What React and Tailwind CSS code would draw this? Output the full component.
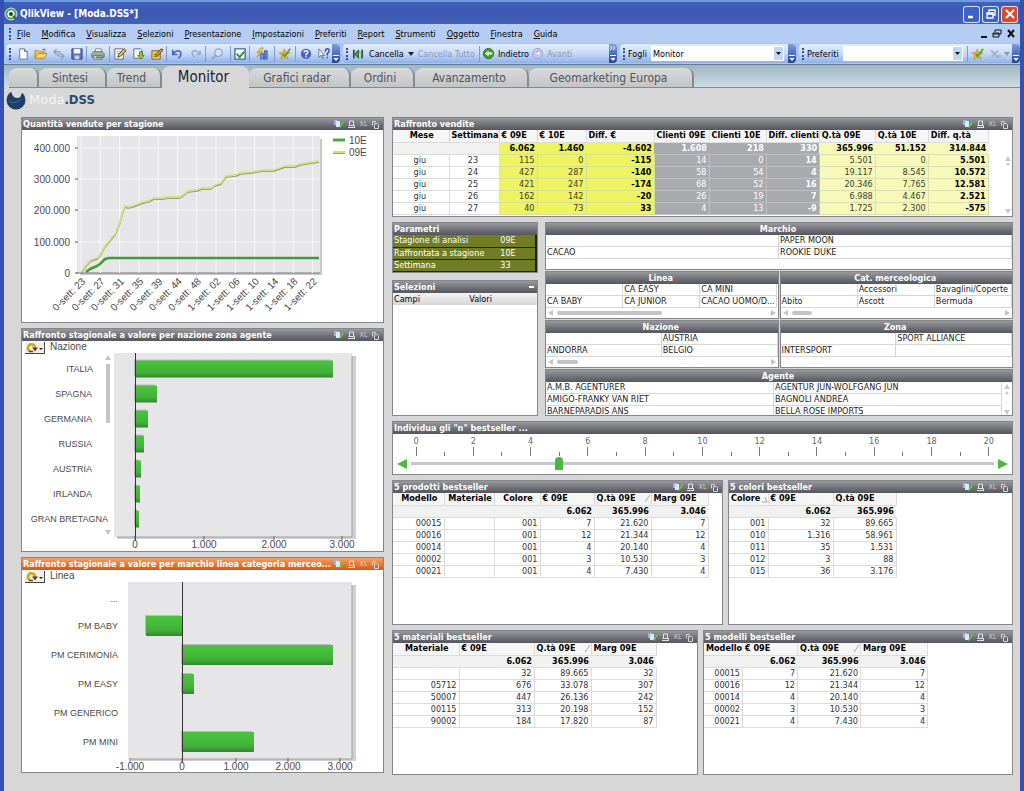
import React, { useState } from "react";

const MENU = [
  "File",
  "Modifica",
  "Visualizza",
  "Selezioni",
  "Presentazione",
  "Impostazioni",
  "Preferiti",
  "Report",
  "Strumenti",
  "Oggetto",
  "Finestra",
  "Guida",
];

const TABS = [
  { name: "", width: "w-[30px]" },
  { name: "Sintesi", width: "w-[68px]" },
  { name: "Trend", width: "w-[55px]" },
  { name: "Monitor", width: "w-[87px]" },
  { name: "Grafici radar", width: "w-[102px]" },
  { name: "Ordini", width: "w-[64px]" },
  { name: "Avanzamento", width: "w-[114px]" },
  { name: "Geomarketing Europa", width: "w-[165px]" },
];

/* ---------- toolbar ---------- */

const ICONS = {
  new: <path d="M4 2h5l3 3v8H4z M9 2v3h3" fill="#fff" stroke="#5b6f96" />,
  open: (
    <>
      <path d="M1 4h4l1 1h5v7H1z" fill="#f3c74e" stroke="#b98325" />
      <path d="M1 12l3-5h10l-3 5z" fill="#fbdc78" stroke="#b98325" />
      <path d="M9 3q2-2 4 1" fill="none" stroke="#5d4a2a" />
    </>
  ),
  refresh: (
    <g fill="none" stroke="#8d9fc4" strokeWidth="1.4">
      <path d="M5 2L2 5l3 3M2 5h5q2 0 2 3" />
      <path d="M10 7l3 3-3 3M13 10H9q-3 0-3-3" />
    </g>
  ),
  save: (
    <>
      <path d="M2 2h11v11H2z" fill="#5673c4" stroke="#33478f" />
      <path d="M4 2h7v5H4z" fill="#f1f4fb" />
      <path d="M5 9h5v4H5z" fill="#c9d2e8" />
    </>
  ),
  print: (
    <>
      <path d="M4 6l1-4h6l1 4z" fill="#fff" stroke="#77828f" />
      <path d="M1 7l2-2h9l2 2v4H1z" fill="#a7b3a9" stroke="#5f6b66" />
      <path d="M3 9h9v4H3z" fill="#e6ece6" stroke="#5f6b66" />
      <path d="M5 11h7" stroke="#3fa33f" strokeWidth="2" />
    </>
  ),
  edit: (
    <>
      <path d="M2 2h9v11H2z" fill="#fff" stroke="#55627c" />
      <path d="M4 5h5M4 7h4" stroke="#8fa0bd" />
      <path d="M5 11l1-3 6-6 2 2-6 6z" fill="#e8c14a" stroke="#4b4021" />
    </>
  ),
  load: (
    <>
      <path d="M2 2h7l2 2v8H2z" fill="#fff" stroke="#55627c" />
      <path d="M8 5h3v4h2l-3 4-4-4h2z" fill="#9cc93c" stroke="#5a7d1c" />
    </>
  ),
  design: (
    <>
      <path d="M2 4h9v9H2z" fill="#f0c960" stroke="#8a6420" />
      <path d="M4 8h5M4 10h4" stroke="#8a6420" />
      <path d="M6 8l6-6 2 1-6 7z" fill="#d7a63a" stroke="#4b4021" />
    </>
  ),
  undo: <path d="M3 3v5h5M3 8q4-6 8-3 2 3-2 7" fill="none" stroke="#4465c0" strokeWidth="1.8" />,
  redo: <path d="M12 4v4H8M12 8Q8 2 4 5q-2 3 2 6" fill="none" stroke="#93a7d3" strokeWidth="1.5" />,
  find: (
    <>
      <circle cx="8" cy="6" r="4" fill="#d5e0f4" stroke="#97a5c4" strokeWidth="1.4" />
      <path d="M5 9l-4 4" stroke="#a99db5" strokeWidth="2" />
    </>
  ),
  check: (
    <>
      <path d="M2 2h11v11H2z" fill="#fff" stroke="#4a66a8" strokeWidth="1.5" />
      <path d="M4 7l3 4 5-6" fill="none" stroke="#2f9e36" strokeWidth="2.2" />
    </>
  ),
  chart: (
    <>
      <path d="M6 7h3v6H6z" fill="#7ba4e6" stroke="#3a5ca8" />
      <path d="M10 4h3v9h-3z" fill="#5f88d8" stroke="#3a5ca8" />
      <path d="M6 1L2 6h3l-3 5 6-6H5l4-4z" fill="#f6d54b" stroke="#a98017" strokeWidth=".7" />
    </>
  ),
  star: (
    <>
      <path d="M7 2l1 4 5 0-4 3 2 4-4-2-4 2 1-4-3-3h4z" fill="#f2b53c" stroke="#c27d1c" strokeWidth=".6" />
      <path d="M5 7l2 3 6-8" fill="none" stroke="#3fae2f" strokeWidth="1.8" />
    </>
  ),
  help: (
    <>
      <circle cx="7.5" cy="7.5" r="6" fill="#4465c4" stroke="#c9d6f2" />
      <path d="M5.500 6q0-2 2-2t2 2q0 1-2 2v1M7.500 10v1.300" fill="none" stroke="#fff" strokeWidth="1.5" />
    </>
  ),
  whats: (
    <>
      <path d="M2 2v9l2-2 2 4 1-1-2-3h3z" fill="#fff" stroke="#45587f" strokeWidth=".8" />
      <path d="M9 5q0-3 2-3t2 2q0 2-2 3v2M11 10.500v1.500" fill="none" stroke="#3455b0" strokeWidth="1.6" />
    </>
  ),
  cancella: (
    <>
      <path d="M3 3v9M12 3v9" stroke="#2c4a33" strokeWidth="1.8" />
      <path d="M4 7.500L8 3v9z" fill="#3fa347" stroke="#1f5c28" />
      <path d="M8 4l3 3v5" fill="none" stroke="#5a9a5f" />
    </>
  ),
  back: (
    <>
      <circle cx="7" cy="7" r="5.500" fill="#3f9d34" stroke="#2a6f22" />
      <path d="M3 7l4-3v2h4v2H7v2z" fill="#fff" />
    </>
  ),
  forward: (
    <>
      <circle cx="7" cy="7" r="5.500" fill="#c5c9ea" stroke="#9a9cc9" />
      <path d="M11 7L7 4v2H3v2h4v2z" fill="#fff" stroke="#9a9cc9" strokeWidth=".7" />
    </>
  ),
  remove: <path d="M2 4q4 2 8 8M10 4q-4 2-7 7M10 9l3 1" fill="none" stroke="#a9aebf" strokeWidth="1.8" />,
};

function Icon({ name }) {
  return (
    <svg viewBox="0 0 15 15" className="size-[14px] shrink-0" aria-hidden="true">
      {ICONS[name]}
    </svg>
  );
}

const Grip = () => <div className="mx-[3px] h-3 shrink-0 border-l-2 border-dotted border-[#33508f]" />;
const Sep = () => <div className="h-4 w-px shrink-0 bg-[#7c9bd6]" />;

function ToolButton({ name, className }) {
  return (
    <button aria-label={name} className={`flex shrink-0 items-center justify-center ${className || "w-[18px]"}`}>
      <Icon name={name} />
    </button>
  );
}

function BarEnd({ more }) {
  return (
    <button
      aria-label="Opzioni barra"
      className="flex h-[19px] w-2 shrink-0 flex-col items-center justify-between rounded-r-sm bg-linear-to-b from-[#7d9fdd] to-[#23449a] py-0.5"
    >
      <svg viewBox="0 0 8 5" className="h-[5px] w-2">
        {more && <path d="M1 0l2 2-2 2M4 0l2 2-2 2" fill="none" stroke="#fff" />}
      </svg>
      <svg viewBox="0 0 8 6" className="h-[6px] w-2">
        <path d="M1 .5h6" stroke="#fff" />
        <path d="M1.500 3h5L4 6z" fill="#fff" />
      </svg>
    </button>
  );
}

function Combo({ label, value }) {
  return (
    <label className="flex min-w-0 flex-1 items-center gap-1">
      {label}
      <span className="relative min-w-0 flex-1">
        <select className="block h-[15px] w-full appearance-none bg-white px-0.5 text-black" defaultValue={value}>
          <option>{value}</option>
        </select>
        <svg viewBox="0 0 10 15" className="pointer-events-none absolute top-0 right-0 h-[15px] w-[10px]">
          <path d="M0 1h9v13H0z" fill="#c1d5f7" />
          <path d="M2 6h5L4.500 9z" fill="#111" />
        </svg>
      </span>
    </label>
  );
}

const BAR = "flex h-[19px] items-center rounded-sm bg-linear-to-b from-[#e3edfd] via-[#c6d9f8] to-[#8fb0e8]";

function Toolbar() {
  return (
    <div className="flex h-[21px] items-center gap-[3px] bg-[#a9c4f0] pl-[2px]">
      <div className={BAR}>
        <Grip />
        <ToolButton name="new" />
        <ToolButton name="open" />
        <ToolButton name="refresh" />
        <ToolButton name="save" />
        <Sep />
        <ToolButton name="print" className="w-[22px]" />
        <Sep />
        <ToolButton name="edit" className="w-5" />
        <ToolButton name="load" />
        <ToolButton name="design" />
        <Sep />
        <ToolButton name="undo" className="w-5" />
        <ToolButton name="redo" />
        <Sep />
        <ToolButton name="find" className="w-6" />
        <Sep />
        <ToolButton name="check" />
        <Sep />
        <ToolButton name="chart" className="w-6" />
        <Sep />
        <ToolButton name="star" className="w-5" />
        <Sep />
        <ToolButton name="help" className="w-5" />
        <ToolButton name="whats" className="w-4" />
        <BarEnd />
      </div>
      <div className={`${BAR} w-[274px] shrink-0`}>
        <Grip />
        <button className="flex items-center gap-1">
          <Icon name="cancella" />
          Cancella
          <svg viewBox="0 0 6 4" className="h-1 w-1.5">
            <path d="M0 0h6L3 4z" fill="#222" />
          </svg>
        </button>
        <button className="mx-1 text-[#8b98b4]" disabled>
          Cancella Tutto
        </button>
        <Sep />
        <button className="ml-0.5 flex items-center gap-0.5">
          <Icon name="back" />
          Indietro
        </button>
        <button className="ml-0.5 flex flex-1 items-center gap-0.5 text-[#8b98b4]" disabled>
          <Icon name="forward" />
          Avanti
        </button>
        <BarEnd more />
      </div>
      <div className={`${BAR} min-w-0 flex-[176]`}>
        <Grip />
        <Combo label="Fogli" value="Monitor" />
        <div className="w-1" />
        <BarEnd />
      </div>
      <div className={`${BAR} min-w-0 flex-[221]`}>
        <Grip />
        <Combo label="Preferiti" value="" />
        <div className="w-1" />
        <Sep />
        <ToolButton name="star" className="w-5" />
        <ToolButton name="remove" className="w-4" />
        <svg viewBox="0 0 6 4" className="mr-0.5 h-1 w-1.5">
          <path d="M0 0h6L3 4z" fill="#8e95a8" />
        </svg>
        <BarEnd />
      </div>
    </div>
  );
}

function TitleBar() {
  const box = "flex size-[17px] items-center justify-center rounded-[3px] border border-white/80";
  return (
    <header className="flex h-6 items-center gap-0.5 border-t-2 border-[#6f9be0] bg-linear-to-b from-[#3f61bd] via-[#3d58b1] to-[#4263b9] pt-0.5 pr-0.5">
      <svg viewBox="0 0 14 14" className="size-[14px]">
        <circle cx="7" cy="7" r="6" fill="#58a356" stroke="#cfe2ea" />
        <circle cx="7" cy="7" r="3.500" fill="#fff" />
        <circle cx="7" cy="7" r="2" fill="#1f3f30" />
        <path d="M9 9l3 3" stroke="#2e6a3b" strokeWidth="2" />
      </svg>
      <h1 className="flex-1 text-[10px] font-bold text-white">QlikView - [Moda.DSS*]</h1>
      <button aria-label="Riduci" className={`${box} bg-[#3d62c8]`}>
        <svg viewBox="0 0 12 12" className="size-3">
          <path d="M2 9h5" stroke="#fff" strokeWidth="2.500" />
        </svg>
      </button>
      <button aria-label="Ripristina" className={`${box} bg-[#3d62c8]`}>
        <svg viewBox="0 0 12 12" className="size-3" fill="none" stroke="#fff" strokeWidth="1.300">
          <path d="M4 4V2h6v5H8M2 5h6v5H2zM2 6h6" />
        </svg>
      </button>
      <button aria-label="Chiudi" className={`${box} bg-[#dd4a2e]`}>
        <svg viewBox="0 0 12 12" className="size-3">
          <path d="M2 2l8 8M10 2l-8 8" stroke="#fff" strokeWidth="2" />
        </svg>
      </button>
    </header>
  );
}

function MenuBar() {
  return (
    <nav className="flex h-[19px] items-center bg-[#b5cdf3] pl-[2px]">
      <Grip />
      <div className="flex flex-1 gap-[11px] pl-[3px]">
        {MENU.map((item) => (
          <button key={item} className="first-letter:underline">
            {item}
          </button>
        ))}
      </div>
      <svg viewBox="0 0 36 10" className="mr-1 h-[10px] w-9" fill="none" stroke="#111">
        <path d="M1 8h6" strokeWidth="2" />
        <path d="M15 3V1h6v4h-2M13 4h6v4h-6zM13 5h6" />
        <path d="M28 1l6 7M34 1l-6 7" strokeWidth="2" />
      </svg>
    </nav>
  );
}

function SheetTabs() {
  const [current, setCurrent] = useState("Monitor");
  return (
    <div className="flex h-6 items-end overflow-hidden border-t border-[#5f7f9a] bg-linear-to-b from-[#9fb5bf] to-[#cfdfe6] pl-[5px]">
      {TABS.map((tab) => {
        const active = tab.name === current;
        return (
          <button
            key={tab.name}
            onClick={() => setCurrent(tab.name)}
            className={`${tab.width} shrink-0 rounded-t-lg pr-1 whitespace-nowrap ${
              active
                ? "h-[22px] bg-[#d6d7d6] text-[15px] text-[#1e222b]"
                : "h-[20px] border-r-2 border-b border-[#86898c] bg-linear-to-b from-[#d9dada] to-[#c3c4c5] text-[12px] text-[#4f545c]"
            }`}
          >
            {tab.name}
          </button>
        );
      })}
      <div className="h-px flex-1 bg-[#86898c]" />
    </div>
  );
}

/* ---------- panels ---------- */

function PanelIcons() {
  return (
    <div className="flex items-center gap-[3px]">
      <button aria-label="Copia negli appunti">
        <svg viewBox="0 0 10 10" className="size-[10px]">
          <path d="M0 1h4v5H0z" fill="#8fb6ee" />
          <path d="M2 2h4v6H2z" fill="#dbe9fb" />
          <path d="M5 9l1-3 3-4 1 1-3 5z" fill="#62c84a" />
        </svg>
      </button>
      <button aria-label="Stampa">
        <svg viewBox="0 0 9 9" className="size-[9px]" fill="none" stroke="#e3e3e6">
          <path d="M2.500 5V1h4v4M1 7.500h7M1.500 5.500h6v2" />
        </svg>
      </button>
      <button aria-label="Esporta" className="w-[9px] text-[7px] leading-none text-[#cfcfd4]">
        XL
      </button>
      <button aria-label="Duplica">
        <svg viewBox="0 0 9 9" className="size-[9px]" fill="none" stroke="#d5d5d9">
          <path d="M1.500 5.500v-4h3v1M3.500 3.500h3l1 1v4h-4z" />
        </svg>
      </button>
    </div>
  );
}

const GREY = "bg-linear-to-b from-[#98999d] via-[#75767c] to-[#55565e]";
const ORANGE = "bg-linear-to-b from-[#f3a067] via-[#e67c38] to-[#cf5a18]";

function Panel({ title, icons, orange, center, action, className, children }) {
  return (
    <section
      className={`flex min-h-0 min-w-0 flex-col overflow-hidden border border-[#85868b] bg-white ${className || ""}`}
    >
      <div className={`flex h-3 shrink-0 items-center px-px pr-[3px] text-white ${orange ? ORANGE : GREY}`}>
        <h2 className={`min-w-0 flex-1 truncate font-bold ${center ? "text-center" : ""}`}>{title}</h2>
        {icons && <PanelIcons />}
        {action}
      </div>
      {children}
    </section>
  );
}

/* ---------- charts ---------- */

const WEEKS = [
  "0-sett: 23",
  "0-sett: 27",
  "0-sett: 31",
  "0-sett: 35",
  "0-sett: 39",
  "0-sett: 44",
  "0-sett: 48",
  "1-sett: 02",
  "1-sett: 06",
  "1-sett: 10",
  "1-sett: 14",
  "1-sett: 18",
  "1-sett: 22",
];

const LINE_09E =
  "59,142 65,134 69,130 75,128 78,125 83,116 88,110 93,104 97,95 100,84 103,76 106,77 111,76 121,72 126,71 132,68 141,68 147,67 158,67 161,65 166,61 175,60 180,58 189,58 193,55 199,53 204,46 214,45 218,43 230,42 240,40 252,40 263,36 273,36 278,34 297,31";
const LINE_10E = "64,142 68,139 75,136 78,134 83,129 87,128 297,128";

function SeasonChart() {
  const y = [18, 49, 80, 112, 143];
  return (
    <svg viewBox="0 0 361 191" className="w-full font-['Liberation_Sans'] text-[10px]" fill="#4a4a4a">
      <rect x="58" y="9" width="242" height="136" fill="#c8c8cb" />
      <rect x="55" y="6" width="243" height="137" fill="#e6e6e8" />
      {y.map((v, i) => (
        <g key={v}>
          <path d={`M55 ${v}h243`} stroke={i === 4 ? "#77787c" : "#f7f7f8"} />
          <path d={`M53 ${v}h3`} stroke="#555" />
          <text x="48" y={v + 4} textAnchor="end">
            {i === 4 ? "0" : `${4 - i}00.000`}
          </text>
        </g>
      ))}
      {WEEKS.map((week, i) => {
        const x = 59 + i * 19.3;
        return (
          <g key={week}>
            <path d={`M${x} 6v137`} stroke="#f7f7f8" />
            <text textAnchor="end" transform={`translate(${x + 5} 152) rotate(-45)`}>
              {week}
            </text>
          </g>
        );
      })}
      <g fill="none" strokeLinejoin="round">
        <polyline points={LINE_09E} stroke="#85877a" strokeWidth="1.500" transform="translate(0 1)" />
        <polyline points={LINE_09E} stroke="#d3e37c" strokeWidth="1.800" />
        <polyline points={LINE_10E} stroke="#3f9a3b" strokeWidth="2.500" />
      </g>
      <path d="M311 10h12" stroke="#45ae3c" strokeWidth="3" />
      <path d="M311 23h12" stroke="#9a9c86" strokeWidth="2" />
      <path d="M311 22h12" stroke="#cfe07a" strokeWidth="2" />
      <text x="327" y="14">10E</text>
      <text x="327" y="26">09E</text>
    </svg>
  );
}

function CycleRow({ label }) {
  return (
    <div className="flex h-3 shrink-0 items-center gap-[5px] pl-[3px] font-['Liberation_Sans'] text-[10px] text-[#4a4a4a]">
      <button aria-label="Cambia dimensione" className="mt-px border-r border-b border-[#444] bg-[#f1efe6]">
        <svg viewBox="0 0 19 11" className="h-[11px] w-[19px]">
          <path d="M5 9a3.500 3.500 0 1 1 5-3" fill="none" stroke="#d3a51e" strokeWidth="2.500" />
          <path d="M7 5.500h6l-3 4z" fill="#5c4610" />
          <path d="M4 9.500h4" stroke="#5c4610" strokeWidth="1.500" />
          <path d="M14 6h4l-2 2z" fill="#222" />
        </svg>
      </button>
      {label}
    </div>
  );
}

function BarChart({ rows, ticks, left, zero, height, bottom, barHeight, scroll }) {
  return (
    <svg viewBox={`0 0 361 ${height}`} className="w-full font-['Liberation_Sans'] text-[10px]" fill="#4a4a4a">
      <defs>
        <linearGradient id={`bar${zero}`} x2="0" y2="1">
          <stop offset="0" stopColor="#4cc43e" />
          <stop offset=".7" stopColor="#40b23a" />
          <stop offset="1" stopColor="#34862f" />
        </linearGradient>
      </defs>
      <rect x={left + 3} y="3" width={331 - left} height={bottom - 1} fill="#cfcfd2" />
      <rect x={left} y="0" width={330 - left} height={bottom} fill="#e6e6e8" />
      <path d={`M${left + 3} ${bottom}h${327 - left}M330 3v${bottom - 3}`} stroke="#a2a2a6" />
      {rows.map((row) => (
        <g key={row.name}>
          <text x={row.end} y={row.y + 3} textAnchor="end" className="text-[9px]">
            {row.name}
          </text>
          {row.to && (
            <>
              <rect
                x={row.from - 1}
                y={row.y - barHeight / 2 - 1}
                width={row.to - row.from - 1}
                height={barHeight}
                fill="#bdbdc0"
              />
              <rect
                x={row.from}
                y={row.y - barHeight / 2}
                width={row.to - row.from}
                height={barHeight}
                fill={`url(#bar${zero})`}
              />
            </>
          )}
        </g>
      ))}
      <path d={`M${zero}.5 0v${bottom + 4}`} stroke="#333" />
      {ticks.map((tick) => (
        <g key={tick.label}>
          <path d={`M${tick.x} ${bottom - 1}v4`} stroke="#666" />
          <text x={tick.x} y={bottom + 11} textAnchor="middle">
            {tick.label}
          </text>
        </g>
      ))}
      {scroll && (
        <g fill="#c3c3c6">
          <path d="M83 7h6l-3-5z" />
          <rect x="84" y="11" width="4" height="59" rx="1" />
          <path d="M83 177h6l-3 5z" />
        </g>
      )}
    </svg>
  );
}

const NATIONS = [
  { name: "ITALIA", y: 16, end: 71, from: 113, to: 311 },
  { name: "SPAGNA", y: 41, end: 70, from: 113, to: 135 },
  { name: "GERMANIA", y: 66, end: 70, from: 113, to: 126 },
  { name: "RUSSIA", y: 91, end: 70, from: 113, to: 122 },
  { name: "AUSTRIA", y: 116, end: 70, from: 113, to: 119 },
  { name: "IRLANDA", y: 141, end: 70, from: 113, to: 118 },
  { name: "GRAN BRETAGNA", y: 166, end: 86, from: 113, to: 117 },
];

const LINES = [
  { name: "...", y: 17, end: 96 },
  { name: "PM BABY", y: 44, end: 96, from: 124, to: 160 },
  { name: "PM CERIMONIA", y: 73, end: 96, from: 160, to: 311 },
  { name: "PM EASY", y: 102, end: 96, from: 160, to: 172 },
  { name: "PM GENERICO", y: 131, end: 96 },
  { name: "PM MINI", y: 160, end: 96, from: 160, to: 232 },
];

/* ---------- tables ---------- */

function SortMark({ kind }) {
  return (
    <svg viewBox="0 0 7 8" className="h-2 w-[7px]" fill="none" stroke="#a5a5a8">
      <path d={kind === "asc" ? "M1 7h5L4 2" : "M1 7l5-7"} />
    </svg>
  );
}

function DataTable({ cols, totals, rows }) {
  const align = { l: "text-left", c: "text-center", r: "text-right" };
  return (
    <table className="table-fixed border-collapse self-start leading-[11px]">
      <colgroup>
        {cols.map((c, i) => (
          <col key={i} className={c.width} />
        ))}
      </colgroup>
      <thead>
        <tr className="h-3">
          {cols.map((c, i) => (
            <th
              key={i}
              className={`border-r border-b border-[#dcdcdc] bg-[#f6f6f6] p-0 pl-0.5 whitespace-nowrap ${align[c.head || "l"]}`}
            >
              <span className="flex items-center">
                <span className="flex-1">{c.label}</span>
                {c.sort && <SortMark kind={c.sort} />}
              </span>
            </th>
          ))}
        </tr>
      </thead>
      <tbody>
        <tr className="h-3 font-bold">
          {cols.map((c, i) => (
            <td
              key={i}
              className={`border-b p-0 pr-0.5 text-right ${c.total || c.tint || "border-[#dcdcdc] bg-[#f1f1f1]"}`}
            >
              {totals[i]}
            </td>
          ))}
        </tr>
        {rows.map((row, r) => (
          <tr key={r} className="h-3">
            {cols.map((c, i) => (
              <td
                key={i}
                className={`border-r border-b p-0 pr-0.5 ${align[c.cell || "r"]} ${c.bold ? "font-bold" : ""} ${
                  c.tint || "border-[#dcdcdc] bg-white text-[#333]"
                }`}
              >
                {row[i]}
              </td>
            ))}
          </tr>
        ))}
      </tbody>
    </table>
  );
}

const YELLOW = "bg-[#eef360] border-[#d9dd9a] text-[#3c3c20]";
const YELLOW_BOLD = "bg-[#eef360] border-[#d9dd9a] text-black";
const GREYCELL = "bg-[#a9aaae] border-[#bfc0c3] text-white";
const PALE = "bg-[#f6f9b8] border-[#dcdfae] text-[#3c3c30]";
const PALE_BOLD = "bg-[#f6f9b8] border-[#dcdfae] text-black";

const VENDITE_COLS = [
  { label: "Mese", width: "w-[56px]", head: "c", cell: "c" },
  { label: "Settimana", width: "w-[50px]", head: "c", cell: "c" },
  { label: "€ 09E", width: "w-[38px]", tint: YELLOW, total: YELLOW_BOLD },
  { label: "€ 10E", width: "w-[49px]", tint: YELLOW, total: YELLOW_BOLD },
  { label: "Diff. €", width: "w-[68px]", tint: YELLOW_BOLD, bold: true },
  { label: "Clienti 09E", width: "w-[55px]", tint: GREYCELL },
  { label: "Clienti 10E", width: "w-[57px]", tint: GREYCELL },
  { label: "Diff. clienti", width: "w-[51px]", tint: GREYCELL, bold: true },
  { label: "Q.tà 09E", width: "w-[56px]", tint: PALE, total: PALE_BOLD },
  { label: "Q.tà 10E", width: "w-[53px]", tint: PALE, total: PALE_BOLD },
  { label: "Diff. q.tà", width: "w-[60px]", tint: PALE_BOLD, bold: true },
];
const VENDITE_ROWS = [
  ["giu", "23", "115", "0", "-115", "14", "0", "14", "5.501", "0", "5.501"],
  ["giu", "24", "427", "287", "-140", "58", "54", "4", "19.117", "8.545", "10.572"],
  ["giu", "25", "421", "247", "-174", "68", "52", "16", "20.346", "7.765", "12.581"],
  ["giu", "26", "162", "142", "-20", "26", "19", "7", "6.988", "4.467", "2.521"],
  ["giu", "27", "40", "73", "33", "4", "13", "-9", "1.725", "2.300", "-575"],
];

const PRODOTTI_COLS = [
  { label: "Modello", width: "w-[51px]", head: "c" },
  { label: "Materiale", width: "w-[50px]", head: "c" },
  { label: "Colore", width: "w-[46px]", head: "c" },
  { label: "€ 09E", width: "w-[54px]" },
  { label: "Q.tà 09E", width: "w-[57px]", sort: "desc" },
  { label: "Marg 09E", width: "w-[57px]" },
];
const PRODOTTI_ROWS = [
  ["00015", "", "001", "7", "21.620", "7"],
  ["00016", "", "001", "12", "21.344", "12"],
  ["00014", "", "001", "4", "20.140", "4"],
  ["00002", "", "001", "3", "10.530", "3"],
  ["00021", "", "001", "4", "7.430", "4"],
];

const COLORI_COLS = [
  { label: "Colore", width: "w-[39px]", sort: "asc" },
  { label: "€ 09E", width: "w-[65px]" },
  { label: "Q.tà 09E", width: "w-[63px]" },
];
const COLORI_ROWS = [
  ["001", "32", "89.665"],
  ["010", "1.316", "58.961"],
  ["011", "35", "1.531"],
  ["012", "3", "88"],
  ["015", "36", "3.176"],
];

const MATERIALI_COLS = [
  { label: "Materiale", width: "w-[66px]", head: "c" },
  { label: "€ 09E", width: "w-[75px]" },
  { label: "Q.tà 09E", width: "w-[57px]", sort: "desc" },
  { label: "Marg 09E", width: "w-[65px]" },
];
const MATERIALI_ROWS = [
  ["", "32", "89.665", "32"],
  ["05712", "676", "33.078", "307"],
  ["50007", "447", "26.136", "242"],
  ["00115", "313", "20.198", "152"],
  ["90002", "184", "17.820", "87"],
];

const MODELLI_COLS = [
  { label: "Modello", width: "w-[38px]" },
  { label: "€ 09E", width: "w-[55px]" },
  { label: "Q.tà 09E", width: "w-[63px]", sort: "desc" },
  { label: "Marg 09E", width: "w-[67px]" },
];
const MODELLI_ROWS = PRODOTTI_ROWS.map((r) => [r[0], r[3], r[4], r[5]]);

function VScroll() {
  return (
    <svg viewBox="0 0 8 60" className="h-[60px] w-2" fill="#c9c9cc">
      <path d="M1 6h6L4 1z" />
      <circle cx="4" cy="9" r="1.500" />
      <path d="M1 54h6l-3 5z" />
    </svg>
  );
}

/* ---------- list boxes ---------- */

function ListBox({ title, cols, items, thumb, vscroll }) {
  return (
    <Panel title={title} center>
      <div className="flex">
        <ul className={`grid flex-1 ${cols}`}>
          {items.map((item, i) => (
            <li key={i} className="h-3 truncate border-r border-b border-[#d6d6d6] pl-px leading-[11px] text-[#222]">
              {item}
            </li>
          ))}
        </ul>
        {vscroll && (
          <svg viewBox="0 0 8 36" className="mx-px h-9 w-2" fill="#c9c9cc">
            <path d="M1 7h6L4 2z" />
            <circle cx="4" cy="11" r="1.500" />
            <path d="M1 28h6l-3 5z" />
          </svg>
        )}
      </div>
      {thumb && (
        <div className="flex flex-1 items-center gap-1 px-0.5">
          <svg viewBox="0 0 5 6" className="h-1.5 w-[5px]">
            <path d="M5 0v6L0 3z" fill="#c3c3c6" />
          </svg>
          <div className="flex-1">
            <div className={`h-1 rounded-full bg-[#c3c3c6] ${thumb}`} />
          </div>
          <svg viewBox="0 0 5 6" className="h-1.5 w-[5px]">
            <path d="M0 0v6l5-3z" fill="#c3c3c6" />
          </svg>
        </div>
      )}
    </Panel>
  );
}

function Bestseller() {
  const [n, setN] = useState(5);
  return (
    <Panel title={'Individua gli "n" bestseller ...'} className="h-[54px]">
      <div className="flex h-[22px] justify-between px-[23px] text-[#666]">
        {Array.from({ length: 21 }, (_, i) => (
          <div key={i} className="flex w-0 flex-col items-center justify-end">
            {i % 2 === 0 && <span className="leading-[12px]">{i}</span>}
            <span className={`w-px shrink-0 bg-[#777] ${i % 2 ? "h-1" : "h-[9px]"}`} />
          </div>
        ))}
      </div>
      <div className="flex h-[15px] items-center gap-1 px-1">
        <button aria-label="Meno" onClick={() => setN(Math.max(0, n - 1))}>
          <svg viewBox="0 0 10 10" className="size-[10px]">
            <path d="M10 0v10L0 5z" fill="#4cb83f" />
          </svg>
        </button>
        <input
          type="range"
          aria-label="Numero bestseller"
          min="0"
          max="20"
          value={n}
          onChange={(e) => setN(Number(e.target.value))}
          className="h-[15px] min-w-0 flex-1 appearance-none bg-[linear-gradient(#c6c6cc,#c6c6cc)] bg-[length:100%_3px] bg-center bg-no-repeat [&::-webkit-slider-thumb]:h-[13px] [&::-webkit-slider-thumb]:w-2 [&::-webkit-slider-thumb]:appearance-none [&::-webkit-slider-thumb]:rounded-t-full [&::-webkit-slider-thumb]:rounded-b-sm [&::-webkit-slider-thumb]:bg-[#49b83b]"
        />
        <button aria-label="Più" onClick={() => setN(Math.min(20, n + 1))}>
          <svg viewBox="0 0 10 10" className="size-[10px]">
            <path d="M0 0v10l10-5z" fill="#4cb83f" />
          </svg>
        </button>
      </div>
    </Panel>
  );
}

function Parametri() {
  const rows = [
    ["Stagione di analisi", "09E"],
    ["Raffrontata a stagione", "10E"],
    ["Settimana", "33"],
  ];
  return (
    <Panel title="Parametri" className="shrink-0">
      <table className="w-full border-r-2 border-[#1f2208] bg-[#717d25] leading-[11px] text-white">
        <tbody>
          {rows.map(([name, value]) => (
            <tr key={name} className="h-3 border-b border-[#23260a]">
              <td className="w-3/4 p-0 pl-px">{name}</td>
              <td className="p-0">{value}</td>
            </tr>
          ))}
        </tbody>
      </table>
    </Panel>
  );
}

export default function App() {
  return (
    <div className="flex min-h-screen flex-col border-x-4 border-[#3450b0] bg-[#d6d7d6] font-['DejaVu_Sans_Condensed','Noto_Sans',sans-serif] text-[9px] leading-[12px] text-black">
      <TitleBar />
      <MenuBar />
      <Toolbar />
      <SheetTabs />

      {/* Logo */}
      <div className="flex h-[29px] items-start gap-0.5 pt-0.5 pl-0.5">
        <svg viewBox="0 0 20 20" className="size-5">
          <circle cx="10" cy="10" r="9.500" fill="#1f3f66" />
          <path d="M5 0q1 8 6 8 4 0 4-3 0-2 3-2l-5-3z" fill="#d6d7d6" />
          <path d="M3 11q6 4 12-2" stroke="#47698f" fill="none" />
        </svg>
        <p className="pl-px font-['DejaVu_Sans'] text-[13px] leading-[20px] text-[#f4f4f4]">
          Moda<b className="font-['DejaVu_Sans_Condensed'] text-[#2f4a6b]">.DSS</b>
        </p>
      </div>

      <main className="grid grid-cols-[363fr_621fr] gap-2 pr-[7px] pb-4 pl-[17px]">
        <div className="flex min-w-0 flex-col gap-[5px]">
          <Panel title="Quantità vendute per stagione" icons className="h-[206px]">
            <SeasonChart />
          </Panel>
          <Panel title="Raffronto stagionale a valore per nazione zona agente" icons className="h-[224px]">
            <CycleRow label="Nazione" />
            <BarChart
              rows={NATIONS}
              left={92}
              zero={113}
              bottom={184}
              height={198}
              barHeight={17}
              scroll
              ticks={[
                { x: 113, label: "0" },
                { x: 182, label: "1.000" },
                { x: 252, label: "2.000" },
                { x: 320, label: "3.000" },
              ]}
            />
          </Panel>
          <Panel
            title="Raffronto stagionale a valore per marchio linea categoria merceo..."
            icons
            orange
            className="h-[216px]"
          >
            <CycleRow label="Linea" />
            <BarChart
              rows={LINES}
              left={106}
              zero={160}
              bottom={177}
              height={190}
              barHeight={20}
              ticks={[
                { x: 108, label: "-1.000" },
                { x: 160, label: "0" },
                { x: 214, label: "1.000" },
                { x: 266, label: "2.000" },
                { x: 318, label: "3.000" },
              ]}
            />
          </Panel>
        </div>

        <div className="flex min-w-0 flex-col gap-[5px]">
          <Panel title="Raffronto vendite" icons className="h-[100px]">
            <div className="flex items-end justify-between">
              <DataTable
                cols={VENDITE_COLS}
                totals={["", "", "6.062", "1.460", "-4.602", "1.608", "218", "330", "365.996", "51.152", "314.844"]}
                rows={VENDITE_ROWS}
              />
              <VScroll />
            </div>
          </Panel>

          <div className="grid h-[194px] grid-cols-[146fr_468fr] grid-rows-1 gap-[7px]">
            <div className="flex min-h-0 flex-col gap-[7px]">
              <Parametri />
              <Panel
                title="Selezioni"
                className="flex-1"
                action={<button aria-label="Riduci" className="h-0.5 w-[5px] bg-white" />}
              >
                <table className="w-full text-left leading-[12px]">
                  <thead>
                    <tr className="bg-linear-to-b from-[#f4f4f4] to-[#d5d5d6]">
                      <th className="w-[53%] p-0 pl-px font-normal">Campi</th>
                      <th className="p-0 font-normal">Valori</th>
                    </tr>
                  </thead>
                </table>
              </Panel>
            </div>
            <div className="grid min-h-0 grid-rows-[48px_48px_48px_minmax(0,1fr)] gap-px">
              <ListBox title="Marchio" cols="grid-cols-2" items={["", "PAPER MOON", "CACAO", "ROOKIE DUKE"]} />
              <div className="grid min-h-0 grid-cols-2 grid-rows-1 gap-px">
                <ListBox
                  title="Linea"
                  cols="grid-cols-3"
                  items={["", "CA EASY", "CA MINI", "CA BABY", "CA JUNIOR", "CACAO UOMO/D..."]}
                  thumb="w-1/2"
                />
                <ListBox
                  title="Cat. merceologica"
                  cols="grid-cols-3"
                  items={["", "Accessori", "Bavaglini/Coperte", "Abito", "Ascott", "Bermuda"]}
                  thumb="w-[10%]"
                />
              </div>
              <div className="grid min-h-0 grid-cols-2 grid-rows-1 gap-px">
                <ListBox title="Nazione" cols="grid-cols-2" items={["", "AUSTRIA", "ANDORRA", "BELGIO"]} thumb="w-[10%]" />
                <ListBox title="Zona" cols="grid-cols-2" items={["", "SPORT ALLIANCE", "INTERSPORT", ""]} />
              </div>
              <ListBox
                title="Agente"
                cols="grid-cols-2"
                vscroll
                items={[
                  "A.M.B. AGENTURER",
                  "AGENTUR JUN-WOLFGANG JUN",
                  "AMIGO-FRANKY VAN RIET",
                  "BAGNOLI ANDREA",
                  "BARNEPARADIS ANS",
                  "BELLA ROSE IMPORTS",
                ]}
              />
            </div>
          </div>

          <Bestseller />

          <div className="grid h-[145px] grid-cols-[331fr_285fr] gap-[5px]">
            <Panel title="5 prodotti bestseller" icons>
              <DataTable cols={PRODOTTI_COLS} totals={["", "", "", "6.062", "365.996", "3.046"]} rows={PRODOTTI_ROWS} />
            </Panel>
            <Panel title="5 colori bestseller" icons>
              <DataTable cols={COLORI_COLS} totals={["", "6.062", "365.996"]} rows={COLORI_ROWS} />
            </Panel>
          </div>

          <div className="grid h-[145px] grid-cols-[306fr_310fr] gap-[5px]">
            <Panel title="5 materiali bestseller" icons>
              <DataTable cols={MATERIALI_COLS} totals={["", "6.062", "365.996", "3.046"]} rows={MATERIALI_ROWS} />
            </Panel>
            <Panel title="5 modelli bestseller" icons>
              <DataTable cols={MODELLI_COLS} totals={["", "6.062", "365.996", "3.046"]} rows={MODELLI_ROWS} />
            </Panel>
          </div>
        </div>
      </main>
    </div>
  );
}
